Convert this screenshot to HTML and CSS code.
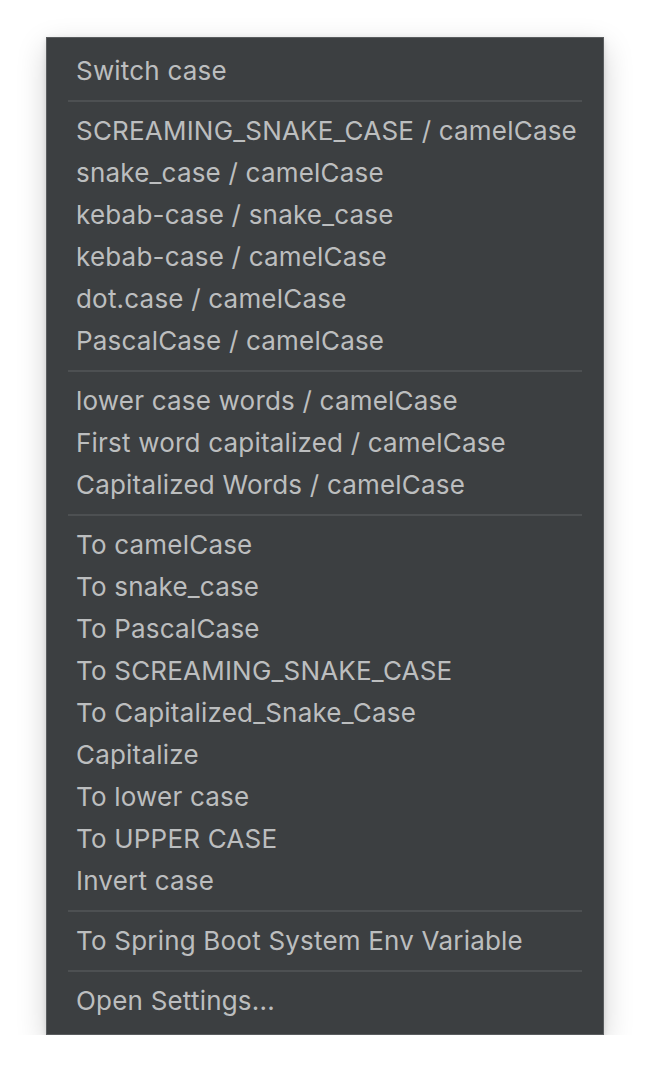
FILE: index.html
```html
<!DOCTYPE html>
<html>
<head>
<meta charset="utf-8">
<link rel="stylesheet" href="styles.css">
</head>
<body>
<div class="menu">
  <div class="item">Switch case</div>
  <div class="sep"></div>
  <div class="item">SCREAMING_SNAKE_CASE / camelCase</div>
  <div class="item">snake_case / camelCase</div>
  <div class="item">kebab-case / snake_case</div>
  <div class="item">kebab-case / camelCase</div>
  <div class="item">dot.case / camelCase</div>
  <div class="item">PascalCase / camelCase</div>
  <div class="sep"></div>
  <div class="item">lower case words / camelCase</div>
  <div class="item">First word capitalized / camelCase</div>
  <div class="item">Capitalized Words / camelCase</div>
  <div class="sep"></div>
  <div class="item">To camelCase</div>
  <div class="item">To snake_case</div>
  <div class="item">To PascalCase</div>
  <div class="item">To SCREAMING_SNAKE_CASE</div>
  <div class="item">To Capitalized_Snake_Case</div>
  <div class="item">Capitalize</div>
  <div class="item">To lower case</div>
  <div class="item">To UPPER CASE</div>
  <div class="item">Invert case</div>
  <div class="sep"></div>
  <div class="item">To Spring Boot System Env Variable</div>
  <div class="sep"></div>
  <div class="item">Open Settings...</div>
</div>
</body>
</html>
```
FILE: styles.css
```css
html, body {
  margin: 0;
  padding: 0;
  background: #ffffff;
}
body {
  padding: 37px 0 0 46px;
}
.menu {
  width: 556px;
  background: #3c3f41;
  border: 1px solid #5a5d5f;
  padding: 12px 0;
  box-shadow: 0 10px 28px rgba(0, 0, 0, 0.18), 0 2px 6px rgba(0, 0, 0, 0.12);
  font-family: Inter, "Noto Sans", sans-serif;
  font-size: 26px;
  letter-spacing: 0.2px;
  color: #bcbebf;
}
.item {
  height: 42px;
  line-height: 42px;
  padding-left: 29px;
  white-space: nowrap;
}
.sep {
  height: 18px;
  display: flex;
  align-items: center;
  padding: 0 21px;
}
.sep::before {
  content: "";
  flex: 1;
  height: 2px;
  background: #4d5052;
}
```
